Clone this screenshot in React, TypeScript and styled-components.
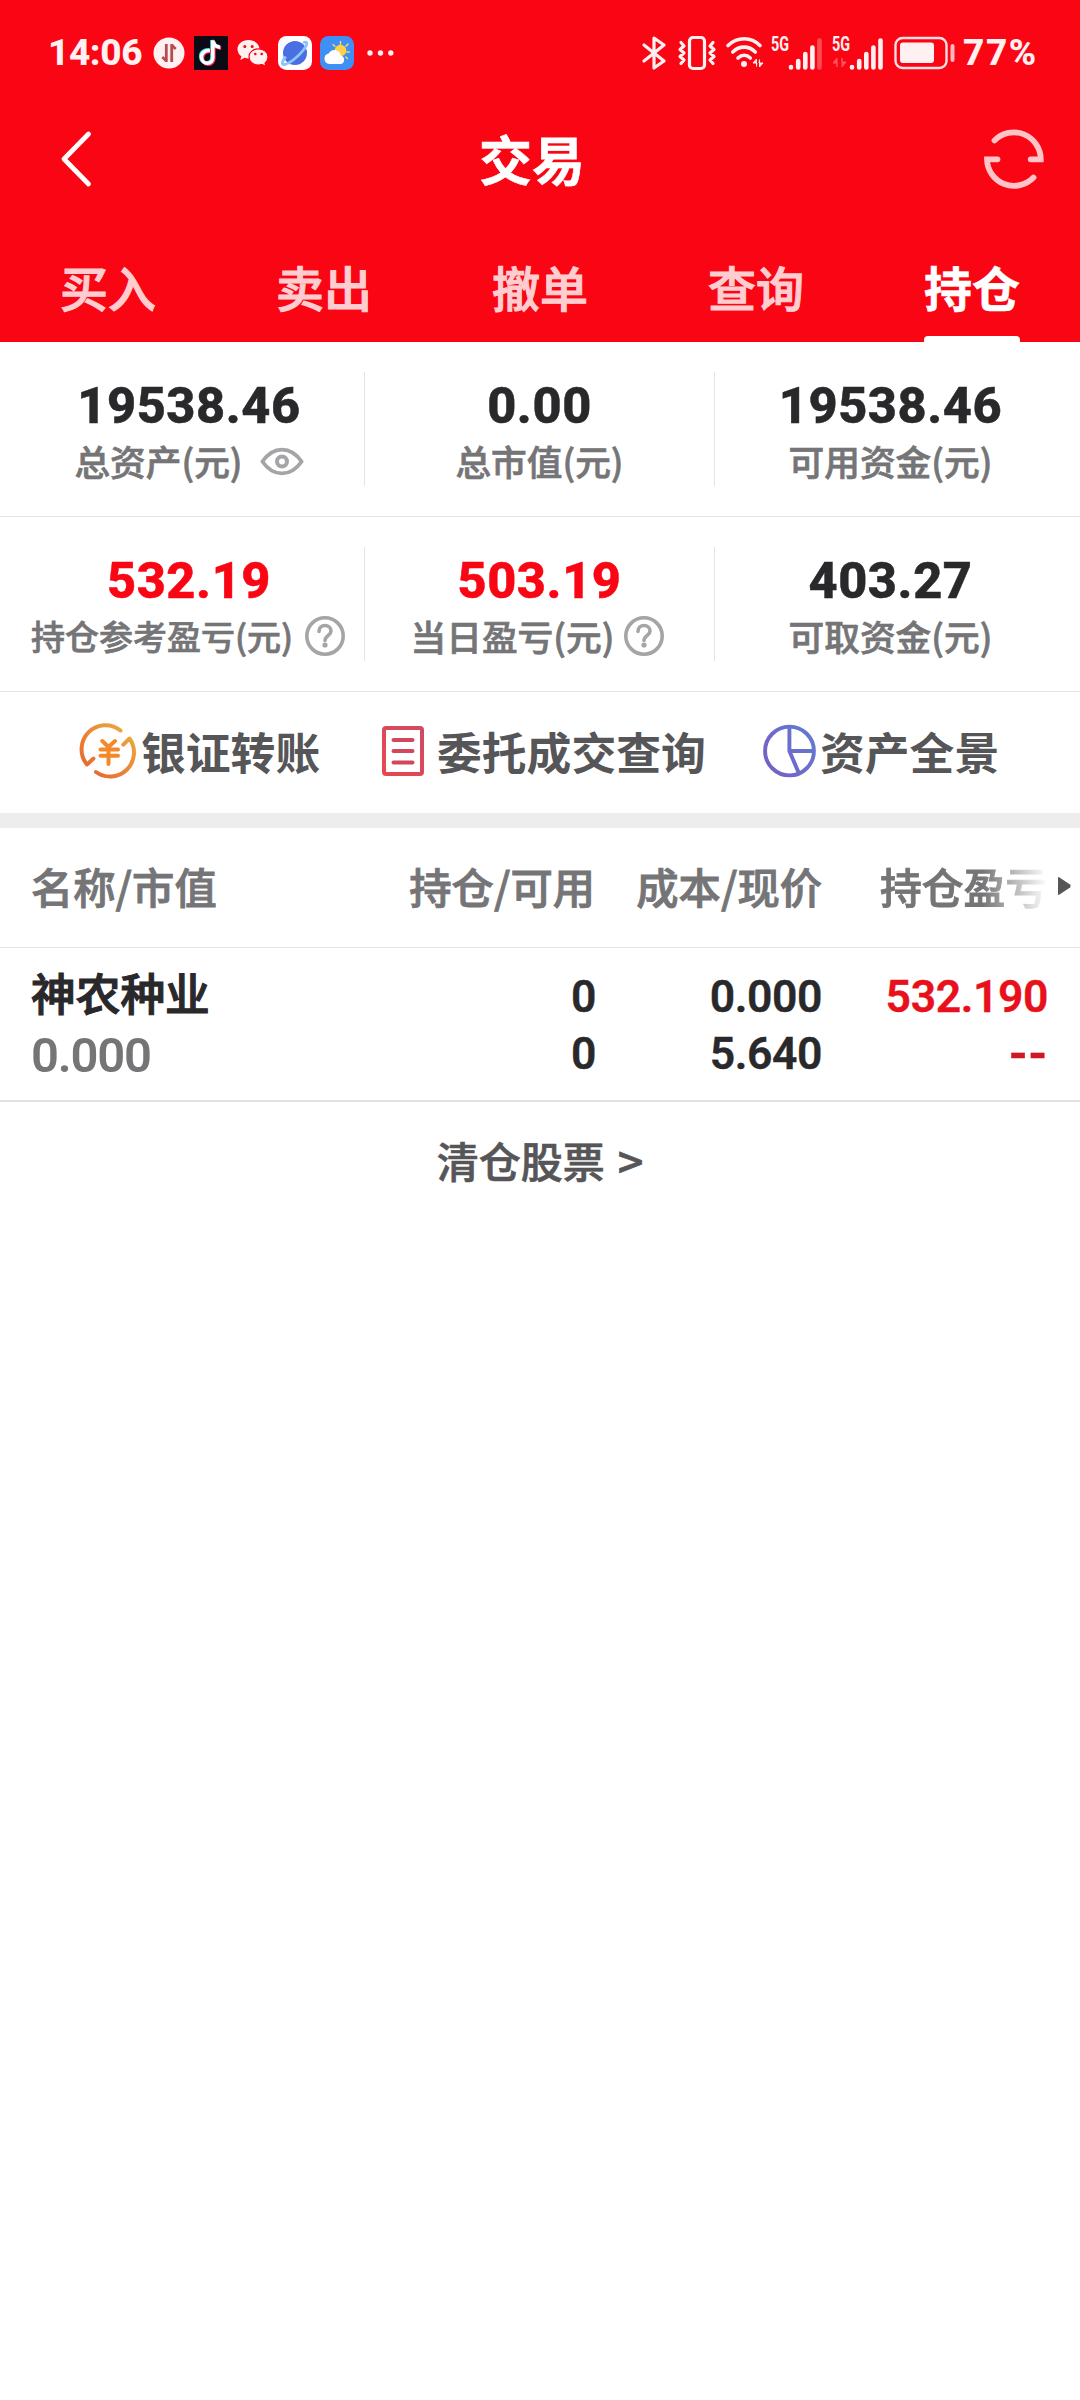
import React from "react";
import styled, { createGlobalStyle } from "styled-components";

const RED = "#fa0513";
const CJK = `"Noto Sans CJK SC", "Noto Sans", sans-serif`;
const NUM = `Roboto, "Noto Sans CJK SC", sans-serif`;

const GlobalStyle = createGlobalStyle`
  * { box-sizing: border-box; }
  html, body { margin: 0; padding: 0; background: #fff; }
  body { font-family: ${CJK}; }
  svg { display: block; flex: none; overflow: visible; }
`;

const Page = styled.main`
  width: 1080px;
  height: 2400px;
  overflow: hidden;
  background: #fff;
  display: flex;
  flex-direction: column;
`;

const Header = styled.header`
  background: ${RED};
  height: 342px;
  flex: none;
  display: flex;
  flex-direction: column;
`;

const StatusBar = styled.div`
  height: 106px;
  padding: 0 43px 0 48px;
  display: flex;
  align-items: center;
  justify-content: space-between;
  color: #fff0f1;
`;

const StatusGroup = styled.div`
  display: flex;
  align-items: center;
`;

const StatusText = styled.span<{ $w: number; $spacing: number }>`
  width: ${(p) => p.$w}px;
  font: 800 37px/40px ${NUM};
  letter-spacing: ${(p) => p.$spacing}px;
  white-space: nowrap;
`;

const Icon = styled.svg<{ $gap?: number }>`
  margin-left: ${(p) => p.$gap ?? 0}px;
`;

const TitleBar = styled.div`
  height: 106px;
  display: grid;
  grid-template-columns: 200px 1fr 216px;
  align-items: center;
`;

const BackButton = styled.div`
  padding-left: 60px;
`;

const RefreshButton = styled.div`
  padding-left: 120px;
`;

const Title = styled.h1`
  margin: 0 0 3px;
  text-align: center;
  color: #fff;
  font: 700 53px/60px ${CJK};
  -webkit-text-stroke: 0.6px currentColor;
`;

const Tabs = styled.nav`
  flex: 1;
  display: grid;
  grid-template-columns: repeat(5, 1fr);
`;

const Tab = styled.div<{ $active?: boolean }>`
  display: flex;
  flex-direction: column;
  align-items: center;
  justify-content: space-between;
  padding-top: 44px;
  font: ${(p) => (p.$active ? 700 : 500)} 48px/60px ${CJK};
  -webkit-text-stroke: ${(p) => (p.$active ? 0.6 : 1.1)}px currentColor;
  color: ${(p) => (p.$active ? "#fff" : "#ffcdd0")};
`;

const TabLine = styled.span`
  width: 96px;
  height: 6px;
  border-radius: 4px 4px 0 0;
  background: #fff;
`;

const SummaryRow = styled.section`
  height: 175px;
  flex: none;
  padding: 0 14px;
  display: grid;
  grid-template-columns: 351px 350px 351px;
  align-items: center;
  border-bottom: 1px solid #e4e4e4;
`;

const SummaryCell = styled.div`
  height: 114px;
  display: flex;
  flex-direction: column;
  align-items: center;
  padding-top: 7px;
  border-right: 1px solid #e4e4e4;
  &:last-child { border-right: 0; }
`;

const Amount = styled.span<{ $red?: boolean }>`
  font: 800 50.5px/54px ${NUM};
  letter-spacing: 0.6px;
  -webkit-text-stroke: 0.5px currentColor;
  color: ${(p) => (p.$red ? RED : "#29292b")};
`;

const LabelLine = styled.div<{ $shift?: number }>`
  display: flex;
  align-items: center;
  height: 44px;
  margin-top: 6px;
  padding-right: ${(p) => p.$shift ?? 0}px;
`;

const Label = styled.span<{ $size?: number }>`
  font: 500 ${(p) => p.$size ?? 35.7}px/44px ${CJK};
  margin-top: -1px;
  -webkit-text-stroke: 0.7px currentColor;
  color: #757577;
  white-space: nowrap;
`;

const Actions = styled.section`
  height: 121px;
  flex: none;
  padding: 0 0 3px 82px;
  display: flex;
  align-items: center;
`;

const Action = styled.div<{ $w: number; $gap: number }>`
  width: ${(p) => p.$w}px;
  display: flex;
  align-items: center;
  gap: ${(p) => p.$gap}px;
  font: 700 44.8px/60px ${CJK};
  color: #565658;
  white-space: nowrap;
`;

const Band = styled.div`
  height: 15px;
  flex: none;
  background: #ededed;
`;

const TableHead = styled.div`
  height: 120px;
  flex: none;
  padding-bottom: 3px;
  display: grid;
  grid-template-columns: 31px 381px 183px 227px 224px 34px;
  align-items: center;
  border-bottom: 1px solid #e4e4e4;
  font: 500 42.3px/60px ${CJK};
  -webkit-text-stroke: 0.9px currentColor;
  color: #757577;
  white-space: nowrap;
`;

const HeadCell = styled.span<{ $right?: boolean }>`
  display: flex;
  justify-content: ${(p) => (p.$right ? "flex-end" : "flex-start")};
`;

const FadedCell = styled.span`
  padding-left: 58px;
  font-size: 41.8px;
  mask-image: linear-gradient(90deg, #000 160px, transparent 226px);
`;

const TableRow = styled.div`
  height: 154px;
  flex: none;
  display: grid;
  grid-template-columns: 31px 381px 184px 226px 226px 32px;
  border-bottom: 2px solid #e2e2e2;
`;

const NameCell = styled.div`
  display: flex;
  flex-direction: column;
  padding-top: 14px;
`;

const StockName = styled.span`
  font: 500 44.7px/60px ${CJK};
  -webkit-text-stroke: 1.2px currentColor;
  color: #29292b;
`;

const StockValue = styled.span`
  margin-top: 4px;
  font: 600 49px/60px ${NUM};
  letter-spacing: -1.2px;
  color: #757577;
`;

const NumCell = styled.div<{ $red?: boolean }>`
  display: flex;
  flex-direction: column;
  align-items: flex-end;
  padding-top: 21px;
  font: 600 44.5px/57px ${NUM};
  letter-spacing: -0.4px;
  -webkit-text-stroke: 0.4px currentColor;
  color: ${(p) => (p.$red ? "#e8101b" : "#29292b")};
`;

const Dashes = styled.span`
  height: 57px;
  display: flex;
  align-items: center;
  color: #cf1824;
  font-size: 50px;
  letter-spacing: 1.2px;
`;

const ClearedLink = styled.div`
  height: 116px;
  display: flex;
  align-items: center;
  justify-content: center;
  gap: 13px;
  font: 500 42px/60px ${CJK};
  -webkit-text-stroke: 0.7px currentColor;
  color: #565658;
`;

const Chevron = styled.span`
  font-size: 45px;
`;

const Help = ({ gap }: { gap: number }) => (
  <Icon $gap={gap} width="40" height="40" viewBox="0 0 40 40" fill="none" stroke="#a5a5a7" strokeWidth="3.600">
    <circle cx="20" cy="20" r="18.200" />
    <path d="M14 15.500c0-4 2.700-6 6-6s6 2.200 6 5.400c0 4.600-6 4.800-6 9.600" strokeLinecap="round" />
    <circle cx="20" cy="29" r="2.600" fill="#a5a5a7" stroke="none" />
  </Icon>
);

const Eye = () => (
  <Icon $gap={17} width="44" height="29" viewBox="0 0 46 30" fill="none" stroke="#a5a5a7" strokeWidth="4">
    <path d="M2.500 15C8 7 15 2.500 23 2.500S38 7 43.500 15C38 23 31 27.500 23 27.500S8 23 2.500 15Z" strokeLinejoin="round" />
    <circle cx="23" cy="15" r="5.200" strokeWidth="4.200" />
  </Icon>
);

const Bars = ({ x, full }: { x: number; full?: boolean }) => (
  <g stroke="#fff0f1" strokeWidth="4.600" strokeLinecap="round">
    <path d={`M${x} 31v.5M${x + 7.2} 25v6.500M${x + 14.300} 18v13.500M${x + 21.400} 11.500v20`} />
    <path d={`M${x + 28.500} 4.500v27`} opacity={full ? 1 : 0.3} />
  </g>
);

const NetText = styled.text`
  font: 700 19.5px ${NUM};
  fill: #fff0f1;
`;

const StatusLeft = () => (
  <StatusGroup>
    <StatusText $w={105} $spacing={-0.4}>14:06</StatusText>
    <Icon width="32" height="32" viewBox="0 0 32 32">
      <circle cx="16" cy="16" r="15.500" fill="#fff0f1" />
      <path d="M13.300 24l-4-4M18.700 8l4 4" fill="none" stroke="#b84b50" strokeWidth="2.600" />
      <path d="M13.300 7v18M18.700 25V7" stroke="#b84b50" strokeWidth="2.800" />
    </Icon>
    <Icon $gap={9} width="34" height="34" viewBox="0 0 34 34">
      <rect width="34" height="34" fill="#0c0a14" />
      <g fill="none" strokeWidth="3.600">
        <path d="M16 14.500c-5-.5-8.500 2.500-8.500 6.600 0 3.700 2.700 6.200 5.800 6.200 3.500 0 5.500-2.500 5.500-5.800V4.500c.6 4 3.500 6.500 7.400 6.700" transform="translate(-.8 -.6)" stroke="#35e5e0" />
        <path d="M16 14.500c-5-.5-8.500 2.500-8.500 6.600 0 3.700 2.700 6.200 5.800 6.200 3.500 0 5.500-2.500 5.500-5.800V4.500c.6 4 3.500 6.500 7.400 6.700" transform="translate(1 .9)" stroke="#f2325a" />
        <path d="M16 14.500c-5-.5-8.500 2.500-8.500 6.600 0 3.700 2.700 6.200 5.800 6.200 3.500 0 5.500-2.500 5.500-5.800V4.500c.6 4 3.500 6.500 7.400 6.700" stroke="#fff" />
      </g>
    </Icon>
    <Icon $gap={9} width="32" height="28" viewBox="0 0 32 28">
      <path d="M11.500 1C5.200 1 .5 5 .5 10.200c0 2.900 1.500 5.400 3.900 7.100L3.300 21l4.300-2.200c1.200.3 2.500.6 3.900.6 6.300 0 11-4 11-9.200S17.800 1 11.500 1Z" fill="#fff0f1" />
      <path d="M21.500 9.800c-5.400 0-9.500 3.600-9.500 8.100s4.100 8.100 9.500 8.100c1.200 0 2.300-.2 3.300-.5l4.200 2-1-3.400c1.900-1.500 3-3.700 3-6.200 0-4.500-4.100-8.100-9.500-8.100Z" fill="#fff0f1" stroke={RED} strokeWidth="1.200" />
      <g fill={RED}>
        <circle cx="7.800" cy="7.500" r="1.500" /><circle cx="15.200" cy="7.500" r="1.500" />
        <circle cx="18.300" cy="15" r="1.300" /><circle cx="24.700" cy="15" r="1.300" />
      </g>
    </Icon>
    <Icon $gap={9} width="34" height="34" viewBox="0 0 34 34">
      <rect width="34" height="34" rx="8.500" fill="#fff" />
      <circle cx="17" cy="17" r="12" fill="#4a6fe3" />
      <path d="M7.200 21.500C3.500 26 3.500 28.800 6.300 28.500 11 28 20 21 25 14.500c4.500-5.800 5.300-9.400 1.200-8.200" fill="none" stroke="#8cc6f8" strokeWidth="2.800" strokeLinecap="round" />
    </Icon>
    <Icon $gap={8} width="34" height="34" viewBox="0 0 34 34">
      <rect width="34" height="34" rx="8.500" fill="#3f8ff5" />
      <g stroke="#ffd95e" strokeWidth="1.400" strokeLinecap="round">
        <path d="M20.500 5.500v3M28 8l-2 2.200M13 8.500l2 2M29.300 16h-2.500M27.500 22.500l-1.600-1.600" />
      </g>
      <circle cx="20.500" cy="14.500" r="5.800" fill="#ffd248" />
      <path d="M9.500 28a5.300 5.300 0 0 1-.7-10.500 6.300 6.300 0 0 1 11.900 2A4.400 4.400 0 0 1 21 28Z" fill="#fff" />
    </Icon>
    <Icon $gap={13} width="28" height="8" viewBox="0 0 28 8" fill="#fff0f1">
      <circle cx="3" cy="4" r="2.700" /><circle cx="13.500" cy="4" r="2.700" /><circle cx="23.800" cy="4" r="2.700" />
    </Icon>
  </StatusGroup>
);

const StatusRight = () => (
  <StatusGroup>
    <Icon width="24" height="34" viewBox="0 0 24 34" fill="none" stroke="#fff0f1" strokeWidth="3.200" strokeLinejoin="round" strokeLinecap="round">
      <path d="M2 9l20 16-10 7V2l10 7L2 25" />
    </Icon>
    <Icon $gap={12} width="38" height="34" viewBox="0 0 38 34" fill="none" stroke="#fff0f1" strokeWidth="3.200" strokeLinejoin="round" strokeLinecap="round">
      <rect x="11.500" y="1.500" width="15" height="31" rx="3.500" />
      <path d="M3 6.500l3 3.500-4 3.500 4 3.500-4 3.500 4 3.500-3 3.500M35 6.500l-3 3.500 4 3.500-4 3.500 4 3.500-4 3.500 3 3.500" />
    </Icon>
    <Icon $gap={10} width="38" height="34" viewBox="0 0 38 34" fill="none" stroke="#fff0f1" strokeWidth="3.600" strokeLinecap="round">
      <path d="M2 9.500c9.500-9 23-9 32 0M6.800 16c6.500-6.500 16-6.500 22.500 0M12 22c3.700-3.600 8.600-3.600 12.300 0" />
      <circle cx="18" cy="28" r="3" fill="#fff0f1" stroke="none" />
      <path d="M30.500 30v-7l-3.500 4h3.500zM33.500 24v7l3.500-4h-3.500z" fill="#fff0f1" strokeWidth="1" />
    </Icon>
    <Icon $gap={7} width="52" height="34" viewBox="0 0 52 34">
      <NetText x="0" y="15" textLength="18" lengthAdjust="spacingAndGlyphs">5G</NetText>
      <Bars x={20} />
    </Icon>
    <Icon $gap={9} width="52" height="34" viewBox="0 0 52 34">
      <NetText x="0" y="15" textLength="18" lengthAdjust="spacingAndGlyphs">5G</NetText>
      <path d="M5 31V22l-4 5h4zM10 22v9l4-5h-4z" fill="#fff0f1" stroke="#fff0f1" opacity=".35" />
      <Bars x={20} full />
    </Icon>
    <Icon $gap={10} width="61" height="34" viewBox="0 0 61 34" fill="none">
      <rect x="1.500" y="2" width="51" height="30" rx="7" stroke="#ffdfe1" strokeWidth="2.400" />
      <rect x="6" y="6.500" width="34" height="20.500" rx="3" fill="#fff0f1" />
      <path d="M58.500 10v14" stroke="#ffb9bd" strokeWidth="4" strokeLinecap="round" />
    </Icon>
    <Icon $gap={8} width="0" height="34" />
    <StatusText $w={74} $spacing={1.600}>77%</StatusText>
  </StatusGroup>
);

const TransferIcon = () => (
  <svg width="54" height="54" viewBox="0 0 54 54" fill="none" strokeLinecap="round" strokeLinejoin="round">
    <defs>
      <linearGradient id="orange" x1="0" y1="1" x2="1" y2="0">
        <stop offset="0" stopColor="#e9692f" /><stop offset="1" stopColor="#eba63e" />
      </linearGradient>
    </defs>
    <g stroke="url(#orange)" strokeWidth="4">
      <path d="M38.500 6.500A24 24 0 0 0 5 40.500L11.500 34.500" />
      <path d="M14 48A24 24 0 0 0 47.500 14.500L41.300 20.700" />
    </g>
    <path d="M20.300 17l6.200 6 6.500-6M18.500 25.500h17.500M18.500 31.800h17.500M26.500 24v16" stroke="#f4892a" strokeWidth="4" />
  </svg>
);

const OrdersIcon = () => (
  <svg width="42" height="50" viewBox="0 0 42 50" fill="none" strokeLinecap="round">
    <defs>
      <linearGradient id="rose" x1="0" y1="1" x2="1" y2="0">
        <stop offset="0" stopColor="#e8484e" /><stop offset="1" stopColor="#d04a63" />
      </linearGradient>
    </defs>
    <rect x="2" y="2" width="38" height="46" rx="2" stroke="url(#rose)" strokeWidth="4" />
    <path d="M11.500 14h19M11.500 25h19M11.500 36.500h19" stroke="#d2485a" strokeWidth="4" />
  </svg>
);

const PieIcon = () => (
  <svg width="53" height="54" viewBox="0 0 53 54" fill="none">
    <defs>
      <linearGradient id="violet" gradientUnits="userSpaceOnUse" x1="0" y1="46" x2="50" y2="12">
        <stop offset="0" stopColor="#7a5cc4" /><stop offset="1" stopColor="#627ad2" />
      </linearGradient>
    </defs>
    <g stroke="url(#violet)" strokeWidth="3.900">
      <circle cx="26.500" cy="27" r="24.400" />
      <path d="M26.400 2v25L36 49.500M26.400 27h24.600" />
    </g>
  </svg>
);

const tabs = ["买入", "卖出", "撤单", "查询", "持仓"];

export default function App() {
  return (
    <Page>
      <GlobalStyle />
      <Header>
        <StatusBar>
          <StatusLeft />
          <StatusRight />
        </StatusBar>
        <TitleBar>
          <BackButton>
            <svg width="34" height="58" viewBox="0 0 34 58" fill="none" stroke="#fff" strokeWidth="4.800" strokeLinecap="round" strokeLinejoin="round">
              <path d="M28.500 4L4 29l24.500 25" />
            </svg>
          </BackButton>
          <Title>交易</Title>
          <RefreshButton>
            <svg width="60" height="60" viewBox="0 0 60 60" fill="none" stroke="#ffc4c8" strokeWidth="5.800" strokeLinecap="round">
              <path d="M10.500 11.500A27 27 0 0 1 56.800 30.300H46.700" />
              <path d="M13.500 30.300H3A27 27 0 0 0 49.500 48.500" />
            </svg>
          </RefreshButton>
        </TitleBar>
        <Tabs>
          {tabs.map((t) => (
            <Tab key={t} $active={t === "持仓"}>
              {t}
              {t === "持仓" && <TabLine />}
            </Tab>
          ))}
        </Tabs>
      </Header>

      <SummaryRow>
        <SummaryCell>
          <Amount>19538.46</Amount>
          <LabelLine><Label>总资产(元)</Label><Eye /></LabelLine>
        </SummaryCell>
        <SummaryCell>
          <Amount>0.00</Amount>
          <LabelLine><Label>总市值(元)</Label></LabelLine>
        </SummaryCell>
        <SummaryCell>
          <Amount>19538.46</Amount>
          <LabelLine><Label>可用资金(元)</Label></LabelLine>
        </SummaryCell>
      </SummaryRow>
      <SummaryRow>
        <SummaryCell>
          <Amount $red>532.19</Amount>
          <LabelLine $shift={2}><Label $size={34}>持仓参考盈亏(元)</Label><Help gap={12} /></LabelLine>
        </SummaryCell>
        <SummaryCell>
          <Amount $red>503.19</Amount>
          <LabelLine $shift={4}><Label>当日盈亏(元)</Label><Help gap={10} /></LabelLine>
        </SummaryCell>
        <SummaryCell>
          <Amount>403.27</Amount>
          <LabelLine><Label>可取资金(元)</Label></LabelLine>
        </SummaryCell>
      </SummaryRow>

      <Actions>
        <Action $w={300} $gap={5}><TransferIcon />银证转账</Action>
        <Action $w={381} $gap={13}><OrdersIcon />委托成交查询</Action>
        <Action $w={240} $gap={4}><PieIcon />资产全景</Action>
      </Actions>
      <Band />

      <TableHead>
        <span />
        <HeadCell>名称/市值</HeadCell>
        <HeadCell $right>持仓/可用</HeadCell>
        <HeadCell $right>成本/现价</HeadCell>
        <FadedCell>持仓盈亏</FadedCell>
        <Icon $gap={11} width="14" height="20" viewBox="0 0 14 20" fill="#565658">
          <path d="M1 2q0-1.500 1.500-.5l10.500 7q1.500 1.500 0 3l-10.500 7Q1 19.500 1 18Z" />
        </Icon>
      </TableHead>
      <TableRow>
        <span />
        <NameCell>
          <StockName>神农种业</StockName>
          <StockValue>0.000</StockValue>
        </NameCell>
        <NumCell><span>0</span><span>0</span></NumCell>
        <NumCell><span>0.000</span><span>5.640</span></NumCell>
        <NumCell $red><span>532.190</span><Dashes>--</Dashes></NumCell>
      </TableRow>
      <ClearedLink><span>清仓股票</span><Chevron>&gt;</Chevron></ClearedLink>
    </Page>
  );
}
